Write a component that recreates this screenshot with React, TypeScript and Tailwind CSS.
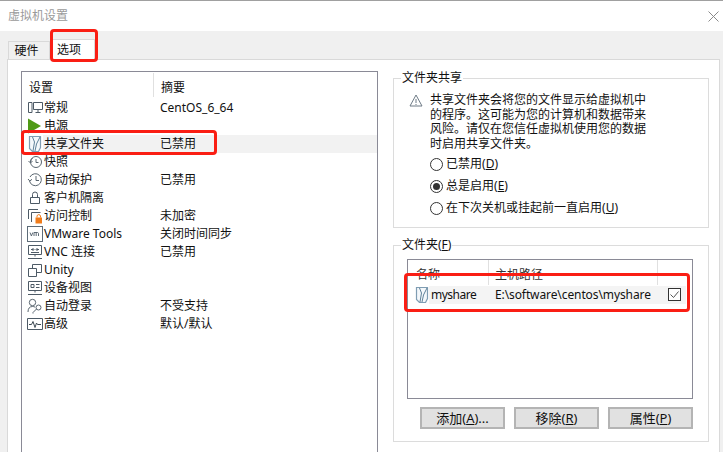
const FONT = "font-['Noto_Sans','Noto_Sans_CJK_SC',sans-serif]";

function ShareFolderIcon() {
  return (
    <svg width="14" height="16" viewBox="0 0 14 16" fill="none" className="shrink-0">
      <path d="M1.500 0.500h11v11l-2 4h-6l-3-3z" fill="#f4f8fb" stroke="#7f9db3" strokeWidth="1.200" />
      <path d="M4.500 1l2 5-1.500 9M12 1l-3.500 7-1.500 7" stroke="#5f8199" />
    </svg>
  );
}

const icons: Record<string, React.ReactNode> = {
  general: (
    <svg width="16" height="16" viewBox="0 0 16 16" fill="none" stroke="#4d5a66" className="shrink-0">
      <path d="M1.500 2.500h3.500v10h-3.500zM6.500 2.500h9v7h-9zM11 9.500v3M8.500 12.500h5" />
    </svg>
  ),
  power: (
    <svg width="16" height="16" viewBox="0 0 16 16" className="shrink-0">
      <path d="M1 0.500L14 8 1 15.500z" fill="#4f9a16" />
    </svg>
  ),
  share: (
    <span className="ml-[1px]">
      <ShareFolderIcon />
    </span>
  ),
  snapshot: (
    <svg width="16" height="16" viewBox="0 0 16 16" fill="none" stroke="#5a6670" className="shrink-0">
      <circle cx="9" cy="8" r="5.500" />
      <path d="M3.500 8a5.500 5.500 0 0 1 2-4M9 5v3.500h2.500M1.500 7l2 2 2-2" />
    </svg>
  ),
  history: (
    <svg width="16" height="16" viewBox="0 0 16 16" fill="none" stroke="#5a6670" className="shrink-0">
      <path d="M3 5a6 6 0 1 1-.5 4M1 7l1.800 2L5 7.300M9 4v4.500h3" />
    </svg>
  ),
  lock: (
    <svg width="16" height="16" viewBox="0 0 16 16" fill="none" stroke="#4d5a66" className="shrink-0">
      <path d="M3.500 7.500h9v6h-9zM5.500 7.500V4.500a2.500 2.500 0 0 1 5 0v3" />
    </svg>
  ),
  access: (
    <svg width="16" height="16" viewBox="0 0 16 16" fill="none" className="shrink-0">
      <path d="M1.500 11V1.500H11M4.500 14V4.500h9" stroke="#4d5a66" />
      <path d="M8.500 9.500h6.500v6H8.500z" fill="#f07c1b" />
      <path d="M10 9.500V8a1.800 1.800 0 0 1 3.500 0v1.500" stroke="#f07c1b" />
    </svg>
  ),
  vm: (
    <svg width="16" height="16" viewBox="0 0 16 16" className="shrink-0">
      <rect x="0.500" y="0.500" width="15" height="15" fill="#fff" stroke="#5d6b78" />
      <path d="M3 6.500l1.400 3.500 1.400-3.500M7 10V6.500h3.500a1.200 1.200 0 0 1 1 1V10M9.200 6.800V10" fill="none" stroke="#4d5a66" strokeWidth="0.900" />
    </svg>
  ),
  vnc: (
    <svg width="16" height="16" viewBox="0 0 16 16" fill="none" stroke="#4d5a66" className="shrink-0">
      <path d="M1.500 1.500h13v9h-13zM8 10.500v2M1 14.500h14M4 5.500h2.500M5.500 4l1.500 1.500L5.500 7M12 5.500H9.500M10.500 4L9 5.500 10.500 7M4 8.500h8" />
    </svg>
  ),
  unity: (
    <svg width="16" height="16" viewBox="0 0 16 16" fill="none" stroke="#4d5a66" className="shrink-0">
      <path d="M1.500 6.500h8v8h-8zM5.500 6.500v-4h9v8h-5" />
    </svg>
  ),
  device: (
    <svg width="16" height="16" viewBox="0 0 16 16" fill="none" stroke="#4d5a66" className="shrink-0">
      <path d="M1.500 1.500h13v9h-13zM4 4.500h3v3H4zM9 4.500h3.500M9 7.500h3.500M8 10.500v2M1 14.500h14" />
    </svg>
  ),
  login: (
    <svg width="16" height="16" viewBox="0 0 16 16" fill="none" stroke="#5a6670" className="shrink-0">
      <circle cx="5.500" cy="4.500" r="3.200" />
      <path d="M1 14c0-3.500 1.500-5.500 4.500-5.500 1 0 1.800.2 2.500.6" />
      <circle cx="11.500" cy="9.500" r="2.500" />
      <path d="M9.500 11l-3.500 3.500v1" />
    </svg>
  ),
  advanced: (
    <svg width="16" height="16" viewBox="0 0 16 16" fill="none" stroke="#4d5a66" className="shrink-0">
      <path d="M0.500 2.500h15v11h-15z" />
      <path d="M2 8.500h2.500l1.500-3 2 6 1.500-4.500 1 1.500h3.500" stroke="#3f4b55" />
    </svg>
  ),
};

const settings = [
  { icon: "general", name: "常规", summary: "CentOS_6_64" },
  { icon: "power", name: "电源", summary: "" },
  { icon: "share", name: "共享文件夹", summary: "已禁用", active: true },
  { icon: "snapshot", name: "快照", summary: "" },
  { icon: "history", name: "自动保护", summary: "已禁用" },
  { icon: "lock", name: "客户机隔离", summary: "" },
  { icon: "access", name: "访问控制", summary: "未加密" },
  { icon: "vm", name: "VMware Tools", summary: "关闭时间同步" },
  { icon: "vnc", name: "VNC 连接", summary: "已禁用" },
  { icon: "unity", name: "Unity", summary: "" },
  { icon: "device", name: "设备视图", summary: "" },
  { icon: "login", name: "自动登录", summary: "不受支持" },
  { icon: "advanced", name: "高级", summary: "默认/默认" },
];

function Radio({ label, hotkey, checked }: { label: string; hotkey: string; checked?: boolean }) {
  return (
    <div className="flex items-center h-[22px]">
      <span className="w-[13px] h-[13px] rounded-full border border-[#333] flex items-center justify-center mr-[3px]">
        {checked && <span className="w-[7px] h-[7px] rounded-full bg-[#333]" />}
      </span>
      <span>
        {label}(<span className="underline">{hotkey}</span>)
      </span>
    </div>
  );
}

function DialogButton({ label, hotkey, suffix = "" }: { label: string; hotkey: string; suffix?: string }) {
  return (
    <button className="w-[85px] h-[22px] bg-[#e1e1e1] border-2 border-[#b4b4b4] flex items-center justify-center text-[13px] leading-none">
      <span>
        {label}(<span className="underline">{hotkey}</span>){suffix}
      </span>
    </button>
  );
}

export default function App() {
  return (
    <div className={`${FONT} relative w-[723px] h-[452px] overflow-hidden bg-[#f0f0f0] text-[12px] text-[#111]`}>
      {/* title bar */}
      <div className="h-[31px] bg-white border-t border-[#a0a0a0] flex items-center justify-between pl-[8px] pr-[4px]">
        <span className="text-[#9a9a9a] text-[12px]">虚拟机设置</span>
        <svg width="11" height="11" viewBox="0 0 11 11" stroke="#8a8a8a">
          <path d="M0.500 0.500l10 10M10.500 0.500l-10 10" />
        </svg>
      </div>

      {/* tabs */}
      <div className="h-[28px] pl-[8px] flex items-end">
        <div className="w-[42px] h-[18px] bg-[#f0f0f0] border border-b-0 border-[#d9d9d9] flex items-center justify-center pr-[5px] leading-none">硬件</div>
        <div className="w-[45px] h-[21px] bg-white border-t border-r border-[#d9d9d9] flex items-center justify-center pr-[6px] leading-none relative top-[1px] z-10">选项</div>
      </div>

      {/* panel */}
      <div className="ml-[7px] w-[713px] h-[400px] bg-white border border-[#d9d9d9] flex pl-[13px] pt-[11px]">
        {/* settings list */}
        <div className="w-[357px] h-[400px] shrink-0 border border-[#8a8a96] border-b-0">
          <div className="flex h-[27px] items-start pt-[1px]">
            <div className="w-[131px] pl-[7px] h-[25px] flex items-center pt-[5px]">设置</div>
            <div className="h-[24px] border-l border-[#e0e0e0] pl-[7px] flex items-center pt-[5px]">摘要</div>
          </div>
          {settings.map((row) => (
            <div key={row.name} className="flex h-[18px] items-center leading-none">
              <div className="w-[21px] pl-[5px] shrink-0 flex items-center">{icons[row.icon]}</div>
              <div className={`flex flex-1 h-full items-center ${row.active ? "bg-[#f2f2f2]" : ""}`}>
                <div className="w-[117px] pl-[1px] whitespace-nowrap">{row.name}</div>
                <div className="whitespace-nowrap">{row.summary}</div>
              </div>
            </div>
          ))}
        </div>

        {/* right column */}
        <div className="ml-[15px] w-[316px]">
          <fieldset className="h-[157px] border border-[#dcdcdc]">
            <legend className="ml-[7px] px-[1px] leading-[14px]">文件夹共享</legend>
            <div className="flex mt-[8px] pl-[15px]">
              <svg width="14" height="13" viewBox="0 0 14 13" fill="none" className="mt-[1px] mr-[7px] shrink-0">
                <path d="M7 1L13 12H1z" stroke="#6e7b86" fill="#fff" />
                <path d="M7 5v4M7 10v1" stroke="#6e7b86" />
              </svg>
              <p className="w-[222px] leading-[14.500px]">
                共享文件夹会将您的文件显示给虚拟机中的程序。这可能为您的计算机和数据带来风险。请仅在您信任虚拟机使用您的数据时启用共享文件夹。
              </p>
            </div>
            <div className="ml-[36px] mt-[2px]">
              <Radio label="已禁用" hotkey="D" />
              <Radio label="总是启用" hotkey="E" checked />
              <Radio label="在下次关机或挂起前一直启用" hotkey="U" />
            </div>
          </fieldset>

          <fieldset className="mt-[10px] h-[204px] border border-[#dcdcdc] px-[13px]">
            <legend className="-ml-[6px] px-[1px] leading-[14px]">
              文件夹(<span className="underline">F</span>)
            </legend>
            <div className="h-[140px] w-[286px] mt-[7px] border border-[#8a8a96]">
              <div className="flex h-[25px] items-center text-[#333]">
                <div className="w-[80px] pl-[8px] pt-[5px]">名称</div>
                <div className="h-full border-l border-[#e0e0e0] w-[169px] pl-[6px] pt-[5px] flex items-center">主机路径</div>
                <div className="h-full border-l border-[#e0e0e0] flex-1" />
              </div>
              <div className="flex h-[18px] items-center mt-[1px] leading-none">
                <div className="w-[21px] pl-[7px] shrink-0">
                  <ShareFolderIcon />
                </div>
                <div className="flex items-center h-full w-[257px] bg-[#f4f4f4]">
                  <div className="w-[66px] pl-[2px] tracking-[-0.500px]">myshare</div>
                  <div className="w-[173px] whitespace-nowrap tracking-[-0.100px]">E:\software\centos\myshare</div>
                  <span className="w-[13px] h-[13px] mb-[2px] border border-[#333] flex items-center justify-center bg-white">
                    <svg width="11" height="11" viewBox="0 0 11 11" fill="none" stroke="#555">
                      <path d="M1.500 5.500l3 3 5-6" />
                    </svg>
                  </span>
                </div>
              </div>
            </div>
            <div className="flex justify-end gap-[9px] mt-[8px] w-[286px]">
              <DialogButton label="添加" hotkey="A" suffix="..." />
              <DialogButton label="移除" hotkey="R" />
              <DialogButton label="属性" hotkey="P" />
            </div>
          </fieldset>
        </div>
      </div>

      {/* red annotation boxes */}
      <div className="absolute left-[50px] top-[29px] w-[48px] h-[33px] border-[3px] border-[#fa1e14] rounded-[4px] z-20" />
      <div className="absolute left-[21px] top-[130px] w-[196px] h-[25px] border-[3px] border-[#fa1e14] rounded-[4px] z-20" />
      <div className="absolute left-[404px] top-[273px] w-[286px] h-[39px] border-[3px] border-[#fa1e14] rounded-[4px] z-20" />
    </div>
  );
}
